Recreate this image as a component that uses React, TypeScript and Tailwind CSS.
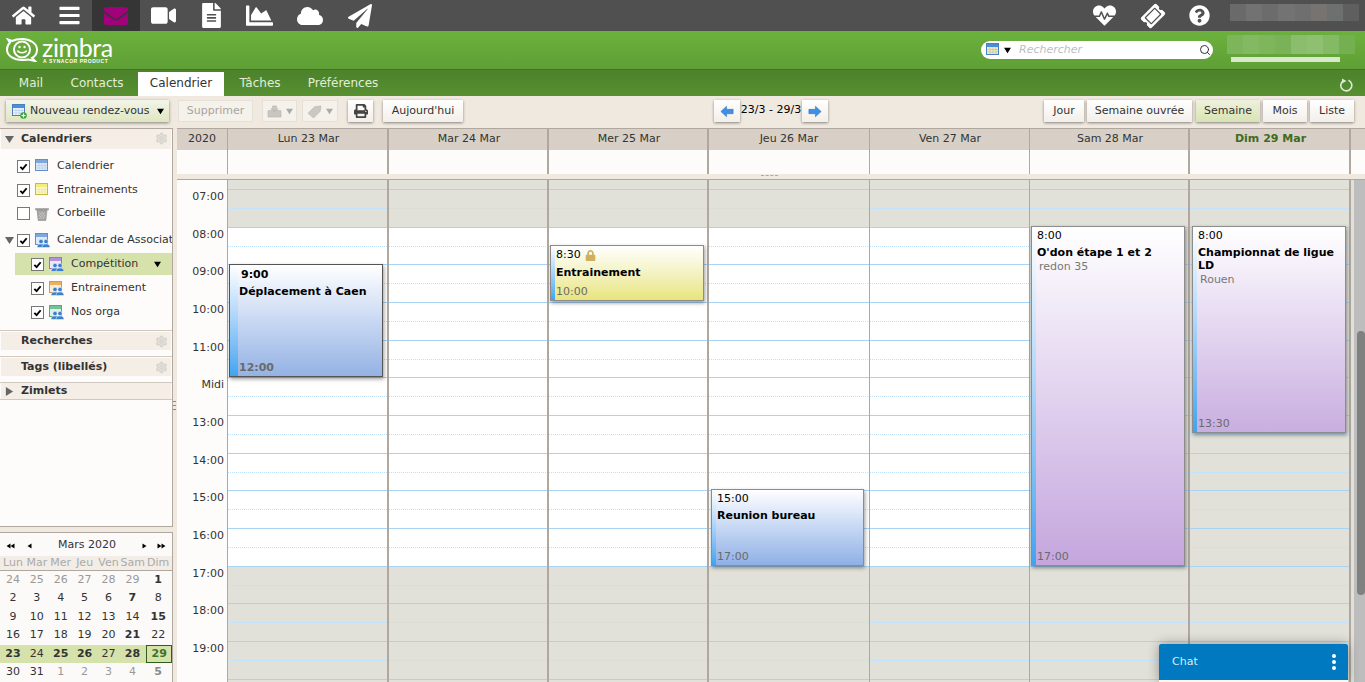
import { Search, Settings } from "lucide-react";
import {
  FaHome, FaBars, FaEnvelope, FaVideo, FaFileAlt, FaChartArea, FaCloud, FaPaperPlane,
  FaHeartbeat, FaTicketAlt, FaQuestionCircle, FaPrint, FaLock,
} from "react-icons/fa";

const topIcons = [
  { Icon: FaHome, w: "w-[46px]", size: 23 },
  { Icon: FaBars, w: "w-[46px]", size: 23 },
  { Icon: FaEnvelope, w: "w-[48px]", size: 24, active: true },
  { Icon: FaVideo, w: "w-[47px]", size: 25 },
  { Icon: FaFileAlt, w: "w-[48px]", size: 25 },
  { Icon: FaChartArea, w: "w-[48px]", size: 27 },
  { Icon: FaCloud, w: "w-[53px]", size: 26 },
  { Icon: FaPaperPlane, w: "w-[48px]", size: 24 },
];

const tabs = [
  { label: "Mail", w: "w-[62px]" },
  { label: "Contacts", w: "w-[70px] mr-[6px]" },
  { label: "Calendrier", w: "w-[86px]", active: true },
  { label: "Tâches", w: "w-[72px]" },
  { label: "Préférences", w: "w-[94px]" },
];

const blurPatches = ["bg-[#6a6a6a]", "bg-[#727272]", "bg-[#6c6c6c]", "bg-[#737373]", "bg-[#6f6f6f]", "bg-[#767370]", "bg-[#6e7070]", "bg-[#5f5f5f]"];
const greenPatches = ["bg-[#7db55a]", "bg-[#84b964]", "bg-[#7fb65c]", "bg-[#7ab357]", "bg-[#8abd6c]", "bg-[#8fc071]", "bg-[#85ba65]", "bg-[#74af50]"];

const days = [
  { label: "Lun 23 Mar", w: "w-[161px]", border: "border-r-2 pl-[2px]", work: true },
  { label: "Mar 24 Mar", w: "w-[160px]", border: "border-r-2 pl-[2px]", work: true },
  { label: "Mer 25 Mar", w: "w-[160px]", border: "border-r-2 pl-[2px]", work: true },
  { label: "Jeu 26 Mar", w: "w-[161px]", border: "border-r", work: true },
  { label: "Ven 27 Mar", w: "w-[160px]", border: "border-r pl-[1px]", work: true },
  { label: "Sam 28 Mar", w: "w-[160px]", border: "border-r-2 pl-[2px]", work: false },
  { label: "Dim 29 Mar", w: "w-[161px]", border: "border-r-2 pl-[2px]", work: false, today: true },
];

const hours = [7, 8, 9, 10, 11, 12, 13, 14, 15, 16, 17, 18, 19, 20];

const miniWeeks = [
  [[24, "o"], [25, "o"], [26, "o"], [27, "o"], [28, "o"], [29, "o"], [1, "b"]],
  [[2, ""], [3, ""], [4, ""], [5, ""], [6, ""], [7, "b"], [8, ""]],
  [[9, ""], [10, ""], [11, ""], [12, ""], [13, ""], [14, ""], [15, "b"]],
  [[16, ""], [17, ""], [18, ""], [19, ""], [20, ""], [21, "b"], [22, ""]],
  [[23, "b"], [24, ""], [25, "b"], [26, "b"], [27, ""], [28, "b"], [29, "t"]],
  [[30, ""], [31, ""], [1, "o"], [2, "o"], [3, "o"], [4, "o"], [5, "ob"]],
] as [number, string][][];

function Tri({ dir = "down", className = "" }: { dir?: "down" | "right" | "left"; className?: string }) {
  const pts = dir === "down" ? "0,1 10,1 5,9" : dir === "right" ? "1,0 9,5 1,10" : "9,0 1,5 9,10";
  return (
    <svg viewBox="0 0 10 10" className={`shrink-0 ${className}`} fill="currentColor">
      <polygon points={pts} />
    </svg>
  );
}

function CalIcon({ head, body, line, people, plus }: { head: string; body: string; line: string; people?: boolean; plus?: boolean }) {
  return (
    <svg viewBox="0 0 16 16" className="w-[16px] h-[16px] shrink-0">
      <rect x="1.5" y="1.5" width="12" height="11" fill={body} stroke={line} />
      <rect x="2" y="2" width="11" height="3" fill={head} />
      {!people && <path d="M2 7.5h11M2 10h11M5 5v7M8 5v7M11 5v7" stroke={line} strokeOpacity="0.35" strokeWidth="0.6" />}
      {people && (
        <g fill="#3b7fd0" stroke="#fff" strokeWidth="0.5">
          <circle cx="7" cy="9.500" r="2.200" />
          <path d="M3 15.500c0-2.500 1.500-3.500 4-3.500s4 1 4 3.500z" />
          <circle cx="12" cy="9.500" r="2.200" />
          <path d="M8 15.500c0-2.500 1.500-3.500 4-3.500s4 1 4 3.500z" />
        </g>
      )}
      {plus && (
        <g>
          <circle cx="12.500" cy="12.500" r="3.300" fill="#3ea33e" />
          <path d="M12.500 10.500v4M10.500 12.500h4" stroke="#fff" strokeWidth="1.200" />
        </g>
      )}
    </svg>
  );
}

function Trash() {
  return (
    <svg viewBox="0 0 16 16" className="w-[16px] h-[16px] shrink-0">
      <path d="M1.500 2.500h13v1.500h-13z" fill="#a8a8a8" stroke="#8a8a8a" strokeWidth="0.5" />
      <path d="M3 4h10l-1.200 10.500H4.200z" fill="#a3a3a3" stroke="#8d8d8d" strokeWidth="0.6" />
      <path d="M5 6l5 6M8 6l3 4M5 9l3 4M11 6l-6 7M8 6l-3 4M11 9l-2 4" stroke="#d5d5d5" strokeWidth="0.5" />
    </svg>
  );
}

function Check({ on = true }: { on?: boolean }) {
  return (
    <div className="w-[13px] h-[13px] shrink-0 bg-white border border-[#777] flex items-center justify-center">
      {on && (
        <svg viewBox="0 0 10 10" className="w-[9px] h-[9px]">
          <path d="M1.500 5.500l2.500 2.500 4.500-5.500" fill="none" stroke="#000" strokeWidth="2.100" />
        </svg>
      )}
    </div>
  );
}

function Btn({ w, children, className = "" }: { w: string; children: React.ReactNode; className?: string }) {
  return (
    <div
      className={`${w} h-[22px] shrink-0 flex items-center justify-center rounded-[1px] bg-gradient-to-b from-white to-[#f3efe9] shadow-[0_1px_3px_rgba(0,0,0,0.45)] text-[11px] text-[#333] ${className}`}
    >
      {children}
    </div>
  );
}

function DisabledBtn({ w, children, className = "" }: { w: string; children: React.ReactNode; className?: string }) {
  return (
    <div className={`${w} h-[22px] shrink-0 flex items-center justify-center gap-[4px] bg-[#f5f1eb] border border-[#e6e0d8] text-[11px] text-[#a9a5a0] ${className}`}>
      {children}
    </div>
  );
}

function ArrowBlue({ left }: { left?: boolean }) {
  return (
    <svg viewBox="0 0 16 14" className="w-[14px] h-[13px]">
      <path
        d={left ? "M1 7l6.500-6v3.500H15v5H7.500V13z" : "M15 7L8.500 1v3.500H1v5h7.500V13z"}
        fill="#3f8fe6"
        stroke="#2a6fc0"
        strokeWidth="0.6"
      />
    </svg>
  );
}

function PanelHeader({ label, tri, gear = true, h = "h-[20px]" }: { label: string; tri?: "down" | "right"; gear?: boolean; h?: string }) {
  return (
    <div className={`${h} shrink-0 mx-[1px] flex items-center bg-[#f4eee7] font-bold text-[11px] text-[#333] relative`}>
      <div className="w-[20px] pl-[4px] flex items-center">
        {tri && <Tri dir={tri} className="w-[9px] h-[9px] text-[#666]" />}
      </div>
      <span>{label}</span>
      {gear && <Settings size={13} className="absolute right-[3px] top-[3px] text-[#d6d2cc]" fill="#e2ded8" />}
    </div>
  );
}

function TreeRow({ children, className = "" }: { children: React.ReactNode; className?: string }) {
  return <div className={`h-[24px] shrink-0 flex items-center whitespace-nowrap overflow-hidden text-[11px] text-[#333] ${className}`}>{children}</div>;
}

function Event({
  pos, to, strip = "w-[4px]", line = "border-[#8c8c8c]", time, lock, title, place, end, endBold, selected,
}: {
  pos: string; to: string; strip?: string; line?: string; time: string; lock?: boolean; title: string; place?: string; end: string; endBold?: boolean; selected?: boolean;
}) {
  return (
    <div className={`absolute ${pos} ${to} bg-gradient-to-b from-white border ${line} shadow-[1px_2px_4px_rgba(0,0,0,0.4)] overflow-hidden text-[11px] text-black`}>
      <div className={`absolute left-0 top-0 bottom-0 ${strip} bg-gradient-to-b from-white to-[#3ea4ef]`} />
      <div className={`leading-[14px] flex items-center gap-[4px] ${selected ? "font-bold pl-[11px] pt-[3px]" : "pl-[5px] pt-[2px]"}`}>
        {time}
        {lock && <FaLock size={11} className="text-[#d0b060]" />}
      </div>
      <div className={`font-bold leading-[13px] pr-[4px] ${lock ? "mt-[4px]" : "mt-[3px]"} ${selected ? "pl-[9px]" : "pl-[5px]"}`}>{title}</div>
      {place && <div className="pl-[7px] mt-[1px] leading-[13px] text-[#777]">{place}</div>}
      <div className={`absolute bottom-[2px] ${selected ? "left-[9px]" : "left-[5px]"} leading-[13px] ${endBold ? "font-bold" : ""} text-[#6a6a6a]`}>{end}</div>
    </div>
  );
}

function TimeGrid() {
  return (
    <div className="flex-1 relative flex overflow-hidden bg-[#fdfcfb]">
      <div className="w-[51px] shrink-0 pt-[10px] border-r border-[#b0a89f] text-[11px] text-[#333]">
        {hours.map((h) => (
          <div key={h} className="h-[37.67px] pr-[3px] text-right leading-[13px]">
            {h === 12 ? "Midi" : `${String(h).padStart(2, "0")}:00`}
          </div>
        ))}
      </div>
      {days.map((d, i) => (
        <div key={d.label} className={`${d.w} shrink-0 relative ${d.border} !pl-0 border-[#b0a89f] bg-[#e1e1da]`}>
          <div className="h-[9px]" />
          {hours.map((h) => (
            <div
              key={h}
              className={`h-[37.67px] border-t border-[#a9d3f3] pt-[18px] ${d.work && h >= 8 && h < 17 ? "bg-white" : "bg-[#e1e1da]"}`}
            >
              <div className="h-px bg-[repeating-linear-gradient(90deg,#bfe0f8_0_1px,transparent_1px_2px)]" />
            </div>
          ))}
          {i === 0 && (
            <Event pos="left-[1px] top-[84px] w-[154px] h-[113px]" to="to-[#94b2e4]" strip="w-[8px]" line="border-[#555]" time="9:00" selected title="Déplacement à Caen" end="12:00" endBold />
          )}
          {i === 2 && (
            <Event pos="left-[1px] top-[65px] w-[154px] h-[56px]" to="to-[#e9e47c]" time="8:30" lock title="Entrainement" end="10:00" />
          )}
          {i === 3 && (
            <Event pos="left-[2px] top-[309px] w-[153px] h-[77px]" to="to-[#8fb0e6]" time="15:00" title="Reunion bureau" end="17:00" />
          )}
          {i === 5 && (
            <Event pos="left-[1px] top-[46px] w-[154px] h-[340px]" to="to-[#c4a6dd]" time="8:00" title="O'don étape 1 et 2" place="redon 35" end="17:00" />
          )}
          {i === 6 && (
            <Event pos="left-[2px] top-[46px] w-[154px] h-[207px]" to="to-[#c9aee0]" time="8:00" title="Championnat de ligue LD" place="Rouen" end="13:30" />
          )}
        </div>
      ))}
      <div className="flex-1 flex justify-end bg-[#e1e1da]">
        <div className="w-[11px] bg-[#bdbdbd] pt-[151px]">
          <div className="w-[8px] ml-[3px] h-[264px] bg-[#7f8080] rounded-[4px]" />
        </div>
      </div>
    </div>
  );
}

export default function App() {
  return (
    <div className="w-[1365px] h-[682px] overflow-hidden relative flex flex-col bg-[#f0e9e0] font-['DejaVu_Sans',sans-serif] text-[11px] text-[#333]">
      {/* top app bar */}
      <div className="h-[31px] shrink-0 bg-[#505050] flex items-stretch text-white">
        {topIcons.map(({ Icon, w, size, active }, i) => (
          <div key={i} className={`${w} flex items-center justify-center ${active ? "bg-[#353535] text-[#a3007c]" : ""}`}>
            <Icon size={size} />
          </div>
        ))}
        <div className="ml-auto flex items-center">
          <FaHeartbeat size={23} className="mr-[26px]" />
          <FaTicketAlt size={22} className="mr-[25px] -rotate-45" />
          <FaQuestionCircle size={21} className="mr-[20px]" />
          <div className="w-[129px] h-[17px] mr-[6px] mb-[6px] flex">
            {blurPatches.map((c, i) => (
              <div key={i} className={`flex-1 ${c}`} />
            ))}
          </div>
        </div>
      </div>

      {/* logo + search */}
      <div className="h-[39px] shrink-0 bg-gradient-to-b from-[#6cb13c] to-[#5f9f36] border-b border-[#3f7423] flex items-center text-white">
        <div className="flex items-start ml-[5px] mt-[1px]">
          <svg viewBox="0 0 34 24" className="w-[34px] h-[24px]" fill="none" stroke="#fff">
            <path d="M3 1.500l4 1.500C10 1.500 13 1 17 1c8 0 15 4.500 15 10.500 0 4.500-2 7-5 8.500l3 3-7-1.500c-2 .4-4 .5-6 .5-8 0-15-4-15-10.500 0-3 1-5 3-7z" strokeWidth="2" />
            <circle cx="17" cy="11.500" r="8" strokeWidth="2" />
            <circle cx="14.500" cy="9" r="1.200" fill="#fff" stroke="none" />
            <circle cx="19.500" cy="9" r="1.200" fill="#fff" stroke="none" />
            <path d="M12.500 12.500c1 3 8 3 9 0" strokeWidth="1.500" />
          </svg>
          <div className="ml-[3px] flex flex-col">
            <span className="font-['Lato',sans-serif] font-normal text-[25px] leading-[19px] tracking-[-0.4px]">zimbra</span>
            <span className="text-[5px] leading-[5px] mt-[2px] ml-[1px] font-bold tracking-[0.55px] font-['Liberation_Sans',sans-serif]">A SYNACOR PRODUCT</span>
          </div>
        </div>
        <div className="ml-auto flex items-center mr-[10px]">
          <div className="w-[232px] h-[18px] mr-[14px] rounded-full bg-white flex items-center pl-[4px] pr-[2px]">
            <CalIcon head="#4a90d9" body="#f3e9c0" line="#4a80c0" />
            <Tri className="w-[7px] h-[7px] ml-[3px] text-black" />
            <span className="ml-[8px] italic text-[11px] text-[#bdbdbd]">Rechercher</span>
            <Search size={12} strokeWidth={2} className="ml-auto text-[#333]" />
          </div>
          <div className="w-[128px] flex flex-col mb-[3px]">
            <div className="h-[19px] flex">
              {greenPatches.map((c, i) => (
                <div key={i} className={`flex-1 ${c}`} />
              ))}
            </div>
            <div className="h-[5px] mt-[3px] ml-[4px] w-[109px] bg-[#d9e8cd]" />
          </div>
        </div>
      </div>

      {/* app tabs */}
      <div className="h-[26px] shrink-0 bg-gradient-to-b from-[#4b822b] to-[#578f31] flex items-end text-[12px] text-[#e3eed9] relative">
        {tabs.map((t) => (
          <div key={t.label} className={`${t.w} h-[24px] pb-[3px] flex items-center justify-center ${t.active ? "bg-white text-[#333]" : ""}`}>
            {t.label}
          </div>
        ))}
        <svg viewBox="0 0 14 14" className="absolute left-[1339px] top-[8px] w-[14px] h-[14px]" fill="none" stroke="#dfe9d6" strokeWidth="1.600">
          <path d="M9.500 2.300a5.500 5.500 0 1 1-5 .3" />
          <polygon points="3,0.500 7.500,3 3,5.500" fill="#dfe9d6" stroke="none" />
        </svg>
      </div>

      {/* toolbar */}
      <div className="h-[32px] shrink-0 flex items-start pt-[4px] pl-[6px] pr-[11px]">
        <div className="w-[163px] h-[22px] shrink-0 flex items-center pl-[5px] bg-gradient-to-b from-[#f3f4e8] to-[#dfe6c1] shadow-[0_1px_3px_rgba(0,0,0,0.45)] text-[#333]">
          <CalIcon head="#4a90d9" body="#eef4fb" line="#4a80c0" plus />
          <span className="ml-[3px]">Nouveau rendez-vous</span>
          <Tri className="w-[7px] h-[7px] ml-auto mr-[5px] text-black" />
        </div>
        <DisabledBtn w="w-[75px]" className="ml-[9px]">Supprimer</DisabledBtn>
        <DisabledBtn w="w-[35px]" className="ml-[9px]">
          <svg viewBox="0 0 16 14" className="w-[15px] h-[13px]" fill="#c9c5bf" stroke="#b5b1ab" strokeWidth="0.6">
            <path d="M1 6h14v7H1zM6 1h4v3h2l-4 3-4-3h2z" />
          </svg>
          <Tri className="w-[7px] h-[7px] text-[#aaa]" />
        </DisabledBtn>
        <DisabledBtn w="w-[36px]" className="ml-[5px]">
          <svg viewBox="0 0 16 14" className="w-[15px] h-[13px]" fill="#cbc7c1" stroke="#b5b1ab" strokeWidth="0.6">
            <path d="M1 9l7-7 7-1-1 6-7 7z" />
          </svg>
          <Tri className="w-[7px] h-[7px] text-[#aaa]" />
        </DisabledBtn>
        <Btn w="w-[25px]" className="ml-[10px]">
          <FaPrint size={14} className="text-[#444]" />
        </Btn>
        <Btn w="w-[80px]" className="ml-[10px]">Aujourd'hui</Btn>
        <Btn w="w-[26px]" className="ml-[251px]"><ArrowBlue left /></Btn>
        <div className="w-[62px] h-[22px] leading-[20px] text-center text-black">23/3 - 29/3</div>
        <Btn w="w-[26px]"><ArrowBlue /></Btn>
        <Btn w="w-[40px]" className="ml-auto">Jour</Btn>
        <Btn w="w-[105px]" className="ml-[3px]">Semaine ouvrée</Btn>
        <Btn w="w-[64px]" className="ml-[4px] !from-[#eef1dc] !to-[#d8e3b4]">Semaine</Btn>
        <Btn w="w-[44px]" className="ml-[3px]">Mois</Btn>
        <Btn w="w-[44px]" className="ml-[3px]">Liste</Btn>
      </div>

      <div className="flex-1 flex min-h-0">
        {/* sidebar */}
        <div className="w-[173px] shrink-0 flex flex-col">
          <div className="h-[399px] shrink-0 bg-[#fdfcfb] border border-l-0 border-[#b0a89f] flex flex-col overflow-hidden">
            <PanelHeader label="Calendriers" tri="down" />
            <div className="h-[5px] shrink-0" />
            <TreeRow className="pl-[17px]">
              <Check /><span className="ml-[4px]"><CalIcon head="#7da7de" body="#dfe9f7" line="#5f8fd0" /></span><span className="ml-[7px]">Calendrier</span>
            </TreeRow>
            <TreeRow className="pl-[17px]">
              <Check /><span className="ml-[4px]"><CalIcon head="#f3ee7a" body="#fbf9cc" line="#c4bd3a" /></span><span className="ml-[7px]">Entrainements</span>
            </TreeRow>
            <TreeRow className="pl-[17px] !h-[23px]">
              <Check on={false} /><span className="ml-[4px]"><Trash /></span><span className="ml-[7px]">Corbeille</span>
            </TreeRow>
            <TreeRow className="pl-[5px] mt-[3px]">
              <Tri className="w-[9px] h-[9px] text-[#666] mr-[3px]" />
              <Check /><span className="ml-[4px]"><CalIcon head="#7da7de" body="#dfe9f7" line="#5f8fd0" people /></span><span className="ml-[7px]">Calendar de Associat</span>
            </TreeRow>
            <TreeRow className="ml-[15px] pl-[16px] bg-[#d6e2ab] !h-[22px] my-[1px] relative">
              <Check /><span className="ml-[4px]"><CalIcon head="#b48fdc" body="#efe6f8" line="#9a78c4" people /></span><span className="ml-[7px]">Compétition</span>
              <Tri className="absolute right-[11px] top-[8px] w-[7px] h-[7px] text-black" />
            </TreeRow>
            <TreeRow className="pl-[31px]">
              <Check /><span className="ml-[4px]"><CalIcon head="#eeb060" body="#fbeed9" line="#d09a50" people /></span><span className="ml-[7px]">Entrainement</span>
            </TreeRow>
            <TreeRow className="pl-[31px]">
              <Check /><span className="ml-[4px]"><CalIcon head="#6fc39a" body="#def3e8" line="#58a882" people /></span><span className="ml-[7px]">Nos orga</span>
            </TreeRow>
            <div className="h-[6px] shrink-0 border-b border-[#cfc9c1] box-content" />
            <div className="h-[1px] shrink-0" />
            <PanelHeader label="Recherches" gear h="h-[18px]" />
            <div className="h-[6px] shrink-0 border-b border-[#cfc9c1] box-content" />
            <div className="h-[1px] shrink-0" />
            <PanelHeader label="Tags (libellés)" gear h="h-[18px]" />
            <div className="h-[6px] shrink-0 border-b border-[#cfc9c1] box-content" />
            <PanelHeader label="Zimlets" tri="right" gear={false} h="h-[16px]" />
            <div className="border-b border-[#cfc9c1]" />
          </div>
          <div className="h-[5px] shrink-0" />
          <div className="flex-1 bg-[#fbfaf8] border border-l-0 border-b-0 border-[#b0a89f] text-[11px] overflow-hidden">
            <div className="h-[23px] pt-[2px] flex items-center pl-[6px] pr-[6px] text-[#333]">
              <Tri dir="left" className="w-[5px] h-[8px] text-black" />
              <Tri dir="left" className="w-[5px] h-[8px] text-black -ml-[1px]" />
              <Tri dir="left" className="w-[5px] h-[8px] text-black ml-[12px]" />
              <span className="flex-1 text-center">Mars 2020</span>
              <Tri dir="right" className="w-[5px] h-[8px] text-black mr-[10px]" />
              <Tri dir="right" className="w-[5px] h-[8px] text-black" />
              <Tri dir="right" className="w-[5px] h-[8px] text-black -ml-[1px]" />
            </div>
            <div className="grid grid-cols-[repeat(6,23.9px)_1fr] pl-[1px] h-[14px] leading-[14px] bg-[#f2ede6] text-[#aaa] text-center border-b border-[#b0a89f] box-content">
              {["Lun", "Mar", "Mer", "Jeu", "Ven", "Sam", "Dim"].map((d) => (
                <div key={d}>{d}</div>
              ))}
            </div>
            {miniWeeks.map((wk, r) => (
              <div key={r} className={`grid grid-cols-[repeat(6,23.9px)_1fr] pl-[1px] h-[18.4px] leading-[18px] text-center ${r === 4 ? "bg-[#d6e2ab]" : ""}`}>
                {wk.map(([n, kind], c) => (
                  <div
                    key={c}
                    className={
                      kind === "o"
                        ? "text-[#999]"
                        : kind === "ob"
                          ? "text-[#888] font-bold"
                          : kind === "b"
                            ? "font-bold"
                            : kind === "t"
                              ? "font-bold text-[#3f7423] border border-[#2f5f1a] leading-[16px] ml-[2px]"
                              : ""
                    }
                  >
                    {n}
                  </div>
                ))}
              </div>
            ))}
          </div>
        </div>

        {/* sash */}
        <div className="w-[4px] shrink-0 pt-[273px]">
          <div className="w-[3px] h-[9px] border-y border-[#888] flex items-center"><div className="w-full border-t border-[#888]" /></div>
        </div>

        {/* calendar */}
        <div className="flex-1 flex flex-col min-w-0 border-t border-[#b0a89f]">
          <div className="h-[21px] shrink-0 flex bg-[#d8d0c6] border-b border-[#b0a89f] box-content -mb-[1px]">
            <div className="w-[51px] shrink-0 border-r border-[#b0a89f] flex items-center justify-center">2020</div>
            {days.map((d) => (
              <div key={d.label} className={`${d.w} shrink-0 ${d.border} border-[#b0a89f] flex items-center justify-center ${d.today ? "font-bold text-[#3f6b22]" : ""}`}>
                {d.label}
              </div>
            ))}
            <div className="flex-1" />
          </div>
          <div className="h-[24px] shrink-0 flex bg-[#fdfcfb]">
            <div className="w-[51px] shrink-0 border-r border-[#b0a89f]" />
            {days.map((d) => (
              <div key={d.label} className={`${d.w} shrink-0 ${d.border} border-[#b0a89f]`} />
            ))}
          </div>
          <div className="h-[5px] shrink-0 bg-[#f0e9e0] border-b border-[#b0a89f] box-content flex justify-center">
            <div className="w-[17px] h-[2px] mt-[1px] ml-[-3px] border-t border-dashed border-[#aaa]" />
          </div>
          <TimeGrid />
        </div>
      </div>

      {/* chat dock */}
      <div className="absolute left-[1159px] bottom-0 w-[189px] h-[38px] rounded-t-[2px] bg-[#fdf6ee] shadow-[0_0_12px_rgba(0,0,0,0.35)]">
        <div className="h-[36px] rounded-t-[2px] bg-[#0079c1] flex items-center pl-[13px] pr-[12px] text-[#d5ecfa]">
          <span>Chat</span>
          <div className="ml-auto flex flex-col gap-[2px]">
            <span className="w-[4px] h-[4px] rounded-full bg-white" />
            <span className="w-[4px] h-[4px] rounded-full bg-white" />
            <span className="w-[4px] h-[4px] rounded-full bg-white" />
          </div>
        </div>
      </div>
    </div>
  );
}
